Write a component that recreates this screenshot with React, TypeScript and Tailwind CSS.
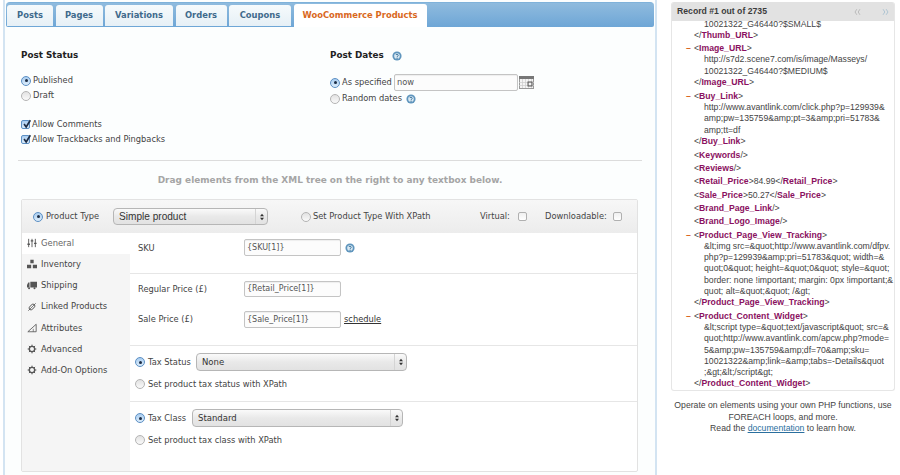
import React from "react";

const Help = ({ className = "" }: { className?: string }) => (
  <svg viewBox="0 0 12 12" className={`w-[10px] h-[10px] shrink-0 ${className}`}>
    <circle cx="6" cy="6" r="5.5" fill="#5f95bd" />
    <circle cx="6" cy="6" r="3.4" fill="#d9e8f2" />
    <path d="M4.4 4.8c.3-1 3-1.2 3.1.3 0 1-1.4 1-1.4 2" stroke="#2f6a96" strokeWidth="1.1" fill="none" />
    <circle cx="6.1" cy="8.6" r=".7" fill="#2f6a96" />
  </svg>
);

const Radio = ({ on = false, className = "" }: { on?: boolean; className?: string }) =>
  on ? (
    <span className={`flex items-center justify-center w-[10px] h-[10px] shrink-0 rounded-full border border-[#5b8fc4] bg-gradient-to-b from-[#a9cdf0] to-[#dcecfa] ${className}`}>
      <span className="w-[3px] h-[3px] rounded-full bg-[#1c2c44]" />
    </span>
  ) : (
    <span className={`block w-[10px] h-[10px] shrink-0 rounded-full border border-[#b4b4b4] bg-gradient-to-b from-[#e2e2e2] to-[#fafafa] ${className}`} />
  );

const Check = ({ on = false }: { on?: boolean }) => (
  <span className={`relative block w-[9px] h-[9px] shrink-0 rounded-[2px] border ${on ? "border-[#5b8fc4] bg-gradient-to-b from-[#a9cdf0] to-[#dcecfa]" : "border-[#b0b0b0] bg-gradient-to-b from-[#f0f0f0] to-white"}`}>
    {on && (
      <svg viewBox="0 0 12 12" className="absolute -top-[2px] left-0 w-[10px] h-[10px]">
        <path d="M2.5 6 5 9.5 10 1.5" stroke="#1c2c44" strokeWidth="2" fill="none" />
      </svg>
    )}
  </span>
);

const Row = ({ children, className = "" }: { children: React.ReactNode; className?: string }) => (
  <div className={`flex items-center ${className}`}>{children}</div>
);

const TextBox = ({ value, className = "" }: { value: string; className?: string }) => (
  <div className={`flex items-center px-[2px] rounded-[2px] border border-[#c4c4c4] bg-[#fcfcfc] text-[#555] shadow-[inset_0_1px_1px_rgba(0,0,0,0.06)] ${className}`}>
    {value}
  </div>
);

const Selectbox = ({ value, className = "", big = false }: { value: string; className?: string; big?: boolean }) => (
  <div className={`flex items-center justify-between pl-[5px] rounded-[4px] border border-[#b6b6b6] bg-gradient-to-b from-[#fafafa] via-[#e9e9e9] to-[#e2e2e2] text-[#333] ${big ? "text-[10.1px] [font-family:'Liberation_Sans',sans-serif]" : "text-[8.5px]"} ${className}`}>
    <span>{value}</span>
    <span className="h-full w-[12px] flex items-center justify-center border-l border-[#d4d4d4]">
      <svg viewBox="0 0 6 10" className="w-[4px] h-[8px]">
        <path d="M3 0 6 4H0zM3 10 0 6h6z" fill="#333" />
      </svg>
    </span>
  </div>
);

const Tab = ({ label, w, active = false }: { label: string; w: string; active?: boolean }) => (
  <div className={`flex items-center justify-center rounded-t-[3px] font-bold text-[8.4px] ${w} ${active ? "h-[23px] bg-white text-[#d9681d]" : "h-[21px] mb-[1px] bg-gradient-to-b from-[#f6fafc] to-[#e6f0f6] text-[#3f6a8c]"}`}>
    {label}
  </div>
);

const Ico = ({ children }: { children: React.ReactNode }) => (
  <svg viewBox="0 0 12 12" className="w-[10px] h-[10px] shrink-0" fill="#555" stroke="#555">
    {children}
  </svg>
);

const gear = (
  <Ico>
    <circle cx="6" cy="6" r="3.2" fill="none" strokeWidth="1.6" />
    <path d="M6 .8v2M6 9.2v2M.8 6h2M9.2 6h2M2.3 2.3l1.4 1.4M8.3 8.3l1.4 1.4M2.3 9.7l1.4-1.4M8.3 3.7l1.4-1.4" strokeWidth="1.2" />
  </Ico>
);

const navItems: { label: string; icon: React.ReactNode }[] = [
  { label: "General", icon: <Ico><path d="M2 1v10M6 1v10M10 1v10" strokeWidth="1.1" /><path d="M.5 7.5h3M4.5 3.5h3M8.5 6.5h3" strokeWidth="1.6" /></Ico> },
  { label: "Inventory", icon: <Ico><path d="M4 1h4v4H4zM0 7h5v4H0zM7 7h5v4H7z" stroke="none" /></Ico> },
  { label: "Shipping", icon: <Ico><path d="M4 2h8v7H4zM0 6l1.5-3H3v6H0z" stroke="none" /><circle cx="2.5" cy="10" r="1.2" stroke="none" /><circle cx="9" cy="10" r="1.2" stroke="none" /></Ico> },
  { label: "Linked Products", icon: <Ico><path d="M1.5 10.5 10.5 1.5" strokeWidth=".9" /><ellipse cx="6" cy="6" rx="4.2" ry="2.4" transform="rotate(-45 6 6)" fill="none" strokeWidth="1.1" /></Ico> },
  { label: "Attributes", icon: <Ico><path d="M1 10.5h10V1.5z" fill="none" strokeWidth="1" /><path d="M7.5 10.5V7" strokeWidth=".8" /></Ico> },
  { label: "Advanced", icon: gear },
  { label: "Add-On Options", icon: gear },
];

const Tag = ({ children }: { children: React.ReactNode }) => <b className="text-[#8a1060]">{children}</b>;

const Open = ({ name, minus = false }: { name: string; minus?: boolean }) => (
  <div className="relative pl-[23px] h-[11.3px]">
    {minus && <span className="absolute left-[15px] top-0 font-bold text-[#d9681d]">–</span>}
    &lt;<Tag>{name}</Tag>&gt;
  </div>
);
const Close = ({ name }: { name: string }) => (
  <div className="pl-[23px] h-[11.3px]">&lt;/<Tag>{name}</Tag>&gt;</div>
);
const Empty = ({ name }: { name: string }) => (
  <div className="pl-[23px] h-[13.3px]">&lt;<Tag>{name}</Tag>/&gt;</div>
);
const Body = ({ lines }: { lines: string[] }) => (
  <div className="pl-[33px]">
    {lines.map((l) => (
      <div key={l} className="h-[11.3px] whitespace-nowrap">{l}</div>
    ))}
  </div>
);
const Pair = ({ name, v }: { name: string; v: string }) => (
  <div className="pl-[23px] h-[13.3px]">&lt;<Tag>{name}</Tag>&gt;{v}&lt;/<Tag>{name}</Tag>&gt;</div>
);

const Chevrons = ({ left = false, className = "" }: { left?: boolean; className?: string }) => (
  <svg viewBox="0 0 10 10" className={`w-[7px] h-[8px] ${className}`} fill="none" stroke="currentColor" strokeWidth="1">
    <path d={left ? "M4 1 1.5 5 4 9M8.5 1 6 5l2.5 4" : "M1.5 1 4 5 1.5 9M6 1l2.5 4L6 9"} />
  </svg>
);

export default function App() {
  return (
    <div className="flex w-[900px] h-[475px] overflow-hidden bg-white text-[#444] text-[8.3px] [font-family:'DejaVu_Sans',sans-serif]">
      {/* Left panel */}
      <div className="ml-[3px] w-[654px] h-[475px] shrink-0 border-x-2 border-[#d3e4f2] bg-[#fcfefe]">
        <div className="mx-[1px] mt-[2px] h-[25px] pl-[1px] flex items-end gap-[2.5px] rounded-t-[4px] rounded-b-[2px] border-t border-[#7fb2da] bg-gradient-to-b from-[#8fbbde] to-[#6ea6d6]">
          <Tab label="Posts" w="w-[46px]" />
          <Tab label="Pages" w="w-[47px]" />
          <Tab label="Variations" w="w-[68px]" />
          <Tab label="Orders" w="w-[51px]" />
          <Tab label="Coupons" w="w-[62px]" />
          <Tab label="WooCommerce Products" w="w-[133px]" active />
        </div>

        <div className="flex pl-[16px] pt-[23px] h-[133px]">
          <div className="w-[309px]">
            <div className="h-[12px] flex items-center font-bold text-[8.8px] text-[#222]">Post Status</div>
            <Row className="mt-[11px] h-[15px] gap-[2px]"><Radio on />Published</Row>
            <Row className="h-[15px] gap-[2px]"><Radio />Draft</Row>
            <Row className="mt-[14px] h-[15px] gap-[2px]"><Check on />Allow Comments</Row>
            <Row className="h-[15px] gap-[2px]"><Check on />Allow Trackbacks and Pingbacks</Row>
          </div>
          <div>
            <Row className="h-[12px] gap-[8px] font-bold text-[8.8px] text-[#222]">Post Dates<Help /></Row>
            <Row className="mt-[12px] h-[17px] gap-[2px]">
              <Radio on />
              <span className="w-[50px]">As specified</span>
              <TextBox value="now" className="w-[124px] h-[17px] text-[8.3px]" />
              <svg viewBox="0 0 15 13" className="w-[15px] h-[13px] -ml-[1px]">
                <rect x=".5" y=".5" width="14" height="12" fill="#f4f4f4" stroke="#999" />
                <rect x="0" y="0" width="15" height="3" fill="#777" />
                <path d="M3.5 3v9M6.5 3v9M9.5 3v9M12.5 3v9M0 6.5h15M0 9.5h15" stroke="#ccc" strokeWidth=".7" />
                <rect x="9" y="6" width="4" height="4" fill="none" stroke="#555" />
              </svg>
            </Row>
            <Row className="h-[15px] gap-[2px]"><Radio />Random dates<Help className="ml-[2px]" /></Row>
          </div>
        </div>

        <div className="mx-[13px] border-t border-[#dcdcdc] h-[39px] pt-[2px] flex items-center justify-center font-bold text-[8.95px] text-[#a5a5a5]">
          Drag elements from the XML tree on the right to any textbox below.
        </div>

        {/* Product box */}
        <div className="ml-[16px] w-[617px] h-[273px] rounded-[2px] border border-[#e2e2e2] bg-white flex flex-col">
          <div className="h-[33px] shrink-0 flex items-center bg-gradient-to-b from-[#f7f7f7] to-[#ececec] relative">
            <Radio on className="ml-[11px]" />
            <span className="ml-[3px] w-[67px]">Product Type</span>
            <Selectbox big value="Simple product" className="w-[155px] h-[17px]" />
            <Radio className="ml-[33px]" />
            <span className="ml-[2px] w-[167px]">Set Product Type With XPath</span>
            <span className="w-[38px]">Virtual:</span>
            <Check />
            <span className="ml-[18px] w-[68px]">Downloadable:</span>
            <Check />
          </div>
          <div className="flex flex-1 min-h-0">
            <div className="w-[108px] shrink-0 bg-[#f5f5f5]">
              <div className="h-[149px]">
                {navItems.map((n, i) => (
                  <div key={n.label} className={`h-[21.2px] pl-[5px] pb-[1px] flex items-center gap-[4px] text-[8.4px] ${i === 0 ? "bg-white text-[#666]" : "text-[#444]"}`}>
                    {n.icon}
                    {n.label}
                  </div>
                ))}
              </div>
            </div>
            <div className="flex-1 min-w-0">
              <div className="h-[41px] border-b border-[#e6e6e6] flex items-start pt-[6px] pl-[8px]">
                <span className="w-[106px] h-[18px] flex items-center">SKU</span>
                <TextBox value="{SKU[1]}" className="w-[97px] h-[17px] text-[8px]" />
                <Help className="ml-[4px] mt-[4px]" />
              </div>
              <div className="h-[72px] border-b border-[#e6e6e6] pt-[7px] pl-[8px]">
                <Row>
                  <span className="w-[106px]">Regular Price (£)</span>
                  <TextBox value="{Retail_Price[1]}" className="w-[97px] h-[16px] text-[8px]" />
                </Row>
                <Row className="mt-[14px]">
                  <span className="w-[106px]">Sale Price (£)</span>
                  <TextBox value="{Sale_Price[1]}" className="w-[97px] h-[17px] text-[8px]" />
                  <span className="ml-[3px] underline text-[#333]">schedule</span>
                </Row>
              </div>
              <div className="h-[56px] border-b border-[#e6e6e6] pt-[7px] pl-[5px]">
                <Row className="gap-[3px]">
                  <Radio on />
                  <span className="w-[45px]">Tax Status</span>
                  <Selectbox value="None" className="w-[211px] h-[18px]" />
                </Row>
                <Row className="mt-[6px] h-[14px] gap-[3px]"><Radio />Set product tax status with XPath</Row>
              </div>
              <div className="pt-[7px] pl-[5px]">
                <Row className="gap-[3px]">
                  <Radio on />
                  <span className="w-[41px]">Tax Class</span>
                  <Selectbox value="Standard" className="w-[211px] h-[18px]" />
                </Row>
                <Row className="mt-[6px] h-[14px] gap-[3px]"><Radio />Set product tax class with XPath</Row>
              </div>
            </div>
          </div>
        </div>
      </div>

      {/* Right panel */}
      <div className="ml-[14px] w-[224px] shrink-0 text-[#444] text-[8.67px] [font-family:'Liberation_Sans',sans-serif]">
        <div className="mt-[2px] w-[224px] h-[389px] rounded-[3px] border border-[#e6e6e6] border-t-0 overflow-hidden bg-white flex flex-col">
          <div className="h-[19px] shrink-0 bg-[#e2e2e2] flex items-center justify-between pl-[5px] pr-[5px] font-bold text-[#3c3c3c]">
            <span>Record #1 out of 2735</span>
            <span className="flex gap-[21px] font-normal">
              <Chevrons left className="text-[#aaa]" />
              <Chevrons className="text-[#9ab8cc]" />
            </span>
          </div>
          <div className="flex-1 min-h-0 overflow-hidden">
            <div className="-ml-[1px] -mt-[2.5px] leading-[11.3px]">
              <Body lines={["10021322_G46440?$SMALL$"]} />
              <Close name="Thumb_URL" />
              <div className="h-[2px]" />
              <Open minus name="Image_URL" />
              <Body lines={["http://s7d2.scene7.com/is/image/Masseys/", "10021322_G46440?$MEDIUM$"]} />
              <Close name="Image_URL" />
              <div className="h-[2.5px]" />
              <Open minus name="Buy_Link" />
              <Body lines={["http://www.avantlink.com/click.php?p=129939&", "amp;pw=135759&amp;pt=3&amp;pri=51783&", "amp;tt=df"]} />
              <Close name="Buy_Link" />
              <div className="h-[2.5px]" />
              <Empty name="Keywords" />
              <Empty name="Reviews" />
              <Pair name="Retail_Price" v="84.99" />
              <Pair name="Sale_Price" v="50.27" />
              <Empty name="Brand_Page_Link" />
              <Empty name="Brand_Logo_Image" />
              <Open minus name="Product_Page_View_Tracking" />
              <Body lines={["&lt;img src=&quot;http://www.avantlink.com/dfpv.", "php?p=129939&amp;pri=51783&quot; width=&", "quot;0&quot; height=&quot;0&quot; style=&quot;", "border: none !important; margin: 0px !important;&", "quot; alt=&quot;&quot; /&gt;"]} />
              <Close name="Product_Page_View_Tracking" />
              <div className="h-[2px]" />
              <Open minus name="Product_Content_Widget" />
              <Body lines={["&lt;script type=&quot;text/javascript&quot; src=&", "quot;http://www.avantlink.com/apcw.php?mode=", "5&amp;pw=135759&amp;df=70&amp;sku=", "10021322&amp;link=&amp;tabs=-Details&quot", ";&gt;&lt;/script&gt;"]} />
              <Close name="Product_Content_Widget" />
            </div>
          </div>
        </div>
        <div className="mt-[9px] text-center leading-[11.5px]">
          Operate on elements using your own PHP functions, use
          <br />
          FOREACH loops, and more.
          <br />
          Read the <span className="underline text-[#2a6f9e]">documentation</span> to learn how.
        </div>
      </div>
    </div>
  );
}
